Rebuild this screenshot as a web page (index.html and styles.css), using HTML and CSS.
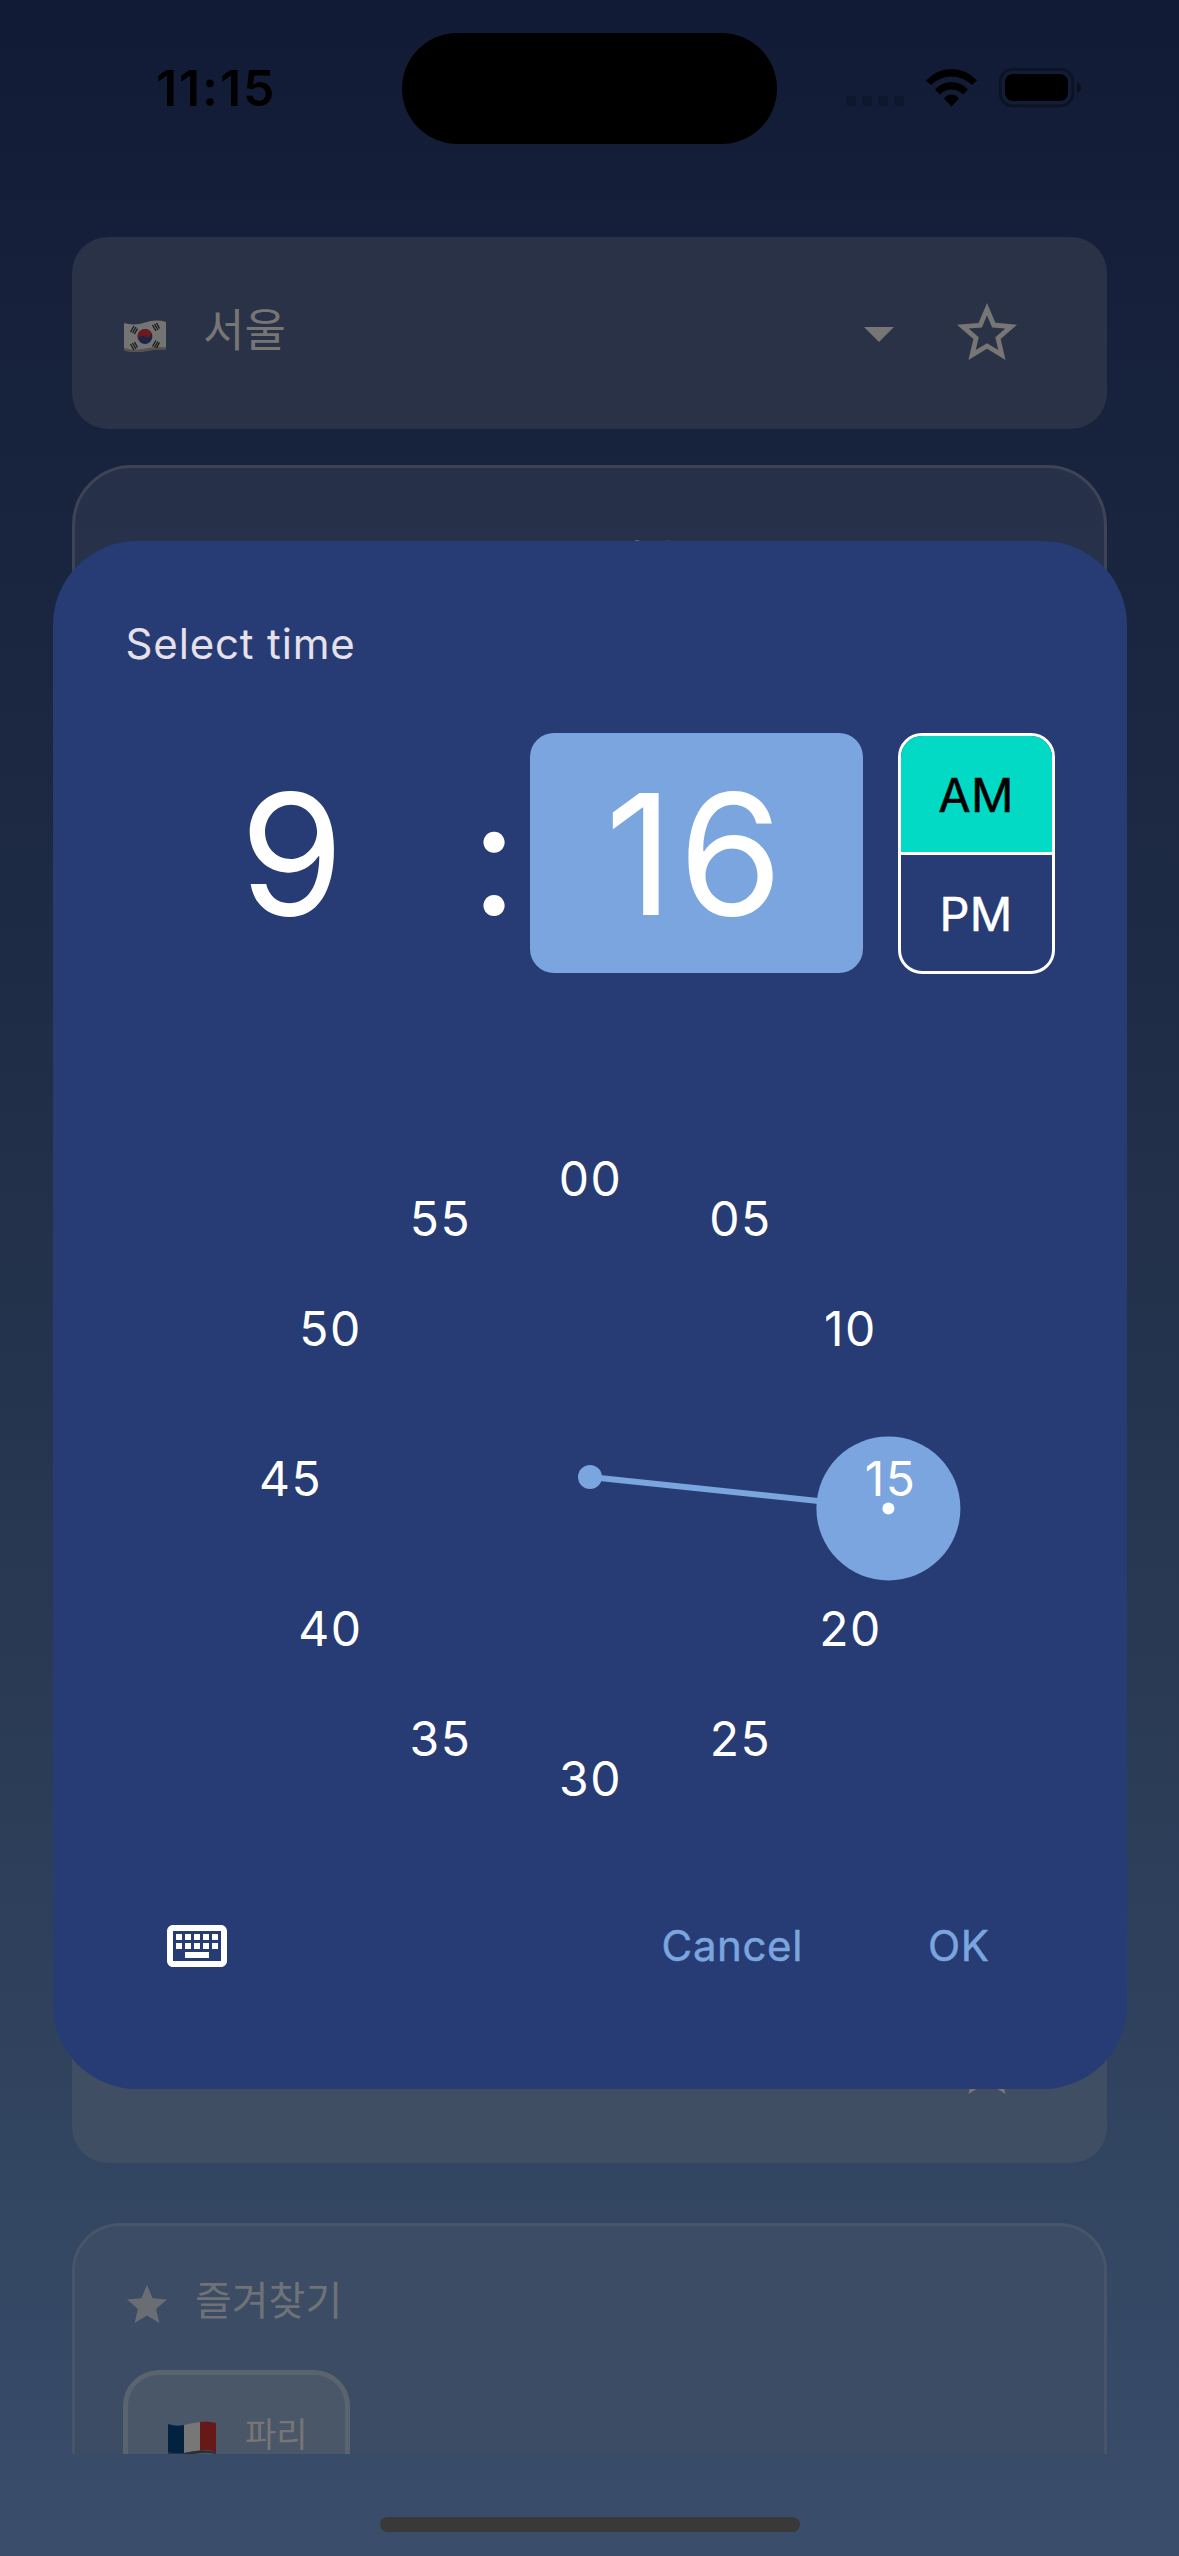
FILE: index.html
```html
<!DOCTYPE html>
<html lang="ko">
<head>
<meta charset="utf-8">
<title>Select time</title>
<link rel="stylesheet" href="styles.css">
</head>
<body>
<div class="screen">
  <header class="status">
    <div class="clock">11:15</div>
    <div class="island"></div>
    <svg class="signals" width="240" height="44" viewBox="0 0 240 44">
      <g fill="#0e172b"><rect x="0" y="28" width="10" height="10" rx="3.5"/><rect x="16" y="28" width="10" height="10" rx="3.5"/><rect x="32" y="28" width="10" height="10" rx="3.5"/><rect x="48" y="28" width="10" height="10" rx="3.5"/></g>
      <path d="M80 12.5Q91 1 105.500 1T131 12.500L126 17Q117 8.500 105.500 8.500T85 17ZM89 21.500Q96 14 105.500 14T122 21.500L117 26.500Q112 21.500 105.500 21.500T94 26.500ZM98 30.500Q101 26.500 105.500 26.500T113 30.500L105.500 38.500Z"/>
      <rect x="154.300" y="1.300" width="72.500" height="36.500" rx="12" fill="none" stroke="#0c1323" stroke-width="2.800"/>
      <rect x="159" y="6" width="63" height="27" rx="8"/>
      <path d="M231 14Q235 16 235 19.500T231 25.500Z" fill="#0a101e"/>
    </svg>
  </header>

  <main class="content">
    <section class="city">
      <svg class="flag-kr" width="42" height="32" viewBox="0 0 42 32">
        <path d="M0 3Q10 6 21 2.500T42 2V29Q32 28 21 30.500T0 30Z" fill="#757474"/>
        <path d="M0 28Q10 31 21 28.500T42 27.500V30Q32 29 21 31.500T0 30.500Z" fill="#55534f"/>
        <circle cx="21" cy="16.500" r="7.400" fill="#1d2444"/>
        <path d="M14 19A7.400 7.400 0 0 1 28 14Q25 19 21 16.500T14 19Z" fill="#6e1820"/>
        <g stroke="#171717" stroke-width="1.300"><path d="M6.500 12l3.500-6M8.500 13l3.500-6M10.500 14l3-5.500M6.500 24l3.500 6M8.500 23l3.500 6M10.500 22l3 5.500M28.500 5l3.500 6M30.500 4l3.500 6M32.500 3l3 5.500M28.500 26.500l3.500-6M30.500 27.500l3.500-6M32.500 28l3-5.500"/></g>
      </svg>
      <span class="city-name">서울</span>
      <svg class="icon" width="72" height="72" viewBox="0 0 24 24"><path d="M7 10l5 5 5-5z"/></svg>
      <svg class="icon star" width="72" height="72" viewBox="0 0 24 24"><path d="M22 9.240l-7.190-.62L12 2 9.190 8.630 2 9.240l5.460 4.730L5.820 21 12 17.270 18.180 21l-1.630-7.030L22 9.240zM12 15.400l-3.760 2.270 1-4.280-3.320-2.880 4.380-.38L12 6.100l1.710 4.040 4.380.38-3.320 2.880 1 4.280L12 15.400z"/></svg>
    </section>

    <section class="panel"><span class="panel-name">서울</span></section>

    <section class="city second">
      <svg class="icon star" width="72" height="72" viewBox="0 0 24 24"><path d="M22 9.240l-7.190-.62L12 2 9.190 8.630 2 9.240l5.460 4.730L5.820 21 12 17.270 18.180 21l-1.630-7.030L22 9.240zM12 15.400l-3.760 2.270 1-4.280-3.320-2.880 4.380-.38L12 6.100l1.710 4.040 4.380.38-3.320 2.880 1 4.280L12 15.400z"/></svg>
    </section>

    <section class="favorites">
      <h2 class="fav-title">
        <svg width="48" height="48" viewBox="0 0 24 24"><path d="M12 17.270L18.180 21l-1.640-7.030L22 9.240l-7.190-.61L12 2 9.190 8.630 2 9.240l5.460 4.730L5.820 21z"/></svg>
        <span>즐겨찾기</span>
      </h2>
      <div class="chip">
        <svg width="48" height="38" viewBox="0 0 48 38">
          <path d="M0 3Q8 6 16 4V32Q8 34 0 31Z" fill="#032240"/>
          <path d="M16 4Q24 2 32 1V29.500Q24 30 16 32Z" fill="#777"/>
          <path d="M32 1Q40-.5 48 2V31Q40 28 32 29.500Z" fill="#661916"/>
          <path d="M0 31Q8 34 16 32T32 29.500T48 31V33Q40 31 32 32T16 34.500T0 33Z" fill="#2c2d33"/>
        </svg>
        <span>파리</span>
      </div>
    </section>
  </main>
  <div class="home"></div>

  <div class="dialog" role="dialog">
    <h1 class="title">Select time</h1>
    <div class="time">
      <div class="digits">9</div>
      <div class="colon">:</div>
      <div class="digits selected">16</div>
      <div class="period">
        <div class="half am">AM</div>
        <div class="half pm">PM</div>
      </div>
    </div>
    <div class="dial">
      <svg class="hand" width="768" height="768" viewBox="-384 -384 768 768">
        <g fill="#7aa5de"><path d="M0 0L298.400 31.400" stroke="#7aa5de" stroke-width="6"/><circle r="12"/><circle cx="298.400" cy="31.400" r="72"/></g>
        <circle cx="298.400" cy="31.400" r="6" fill="#fff"/>
      </svg>
      <span class="m m00">00</span><span class="m m05">05</span><span class="m m10">10</span><span class="m m15">15</span>
      <span class="m m20">20</span><span class="m m25">25</span><span class="m m30">30</span><span class="m m35">35</span>
      <span class="m m40">40</span><span class="m m45">45</span><span class="m m50">50</span><span class="m m55">55</span>
    </div>
    <div class="actions">
      <svg width="72" height="72" viewBox="0 0 24 24" fill="#fff"><path d="M20 7v10H4V7h16m0-2H4c-1.100 0-1.990.9-1.990 2L2 17c0 1.100.9 2 2 2h16c1.100 0 2-.9 2-2V7c0-1.100-.9-2-2-2zm-9 3h2v2h-2V8zm0 3h2v2h-2v-2zM8 8h2v2H8V8zm0 3h2v2H8v-2zm-3 0h2v2H5v-2zm0-3h2v2H5V8zm3 6h8v2H8v-2zm6-3h2v2h-2v-2zm0-3h2v2h-2V8zm3 3h2v2h-2v-2zm0-3h2v2h-2V8z"/></svg>
      <span class="cancel">Cancel</span>
      <span class="ok">OK</span>
    </div>
  </div>
</div>
</body>
</html>
```
FILE: styles.css
```css
* { box-sizing: border-box; }
body { margin: 0; }
.screen {
  position: relative;
  width: 1179px;
  height: 2556px;
  overflow: hidden;
  display: flex;
  flex-direction: column;
  font-family: Inter, "Noto Sans CJK KR", sans-serif;
  background: linear-gradient(#121b36 0, #1f2c45 1000px, #324561 2190px, #3a4e6b 2556px);
}
svg { display: block; flex: none; }

.status {
  height: 237px;
  flex: none;
  display: grid;
  grid-template-columns: 402px 375px 1fr;
  align-items: start;
}
.clock {
  padding: 58px 0 0 156px;
  font-size: 50px;
  line-height: 60px;
  font-weight: 600;
  letter-spacing: 1.900px;
}
.island { margin-top: 33px; height: 111px; border-radius: 56px; background: #000; }
.signals { margin: 68px 0 0 69px; }

.content { height: 2217px; flex: none; padding: 0 72px; overflow: hidden; }
.city {
  height: 192px;
  border-radius: 36px;
  background: #2a3247;
  display: flex;
  padding: 60px 84px 60px 52px;
  fill: #777675;
  color: #777675;
}
.flag-kr { margin-top: 23px; }
.city-name { flex: 1; padding-left: 37px; font-size: 45px; line-height: 68px; font-weight: 400; }
.star { margin-left: 36px; }
.panel {
  height: 1470px;
  margin: 36px 0;
  border: 3px solid #3e4455;
  border-radius: 60px;
  background: linear-gradient(#263048, #3a4a5e);
  text-align: center;
  padding: 58px 0 0 112px;
  color: #777675;
}
.panel-name { display: block; font-size: 50px; line-height: 76px; font-weight: 400; }
.second { background: #404e63; justify-content: flex-end; }
.favorites {
  height: 400px;
  margin-top: 60px;
  border: 3px solid #485569;
  border-radius: 48px;
  background: #3c4c65;
  padding: 48px;
}
.fav-title {
  margin: 0;
  display: flex;
  gap: 24px;
  padding-top: 7px;
  fill: #6a6e73;
  color: #6f7276;
  font-size: 40px;
  line-height: 40px;
  font-weight: 400;
}
.chip {
  width: 227px;
  height: 150px;
  margin-top: 41px;
  border: 5px solid #5a646f;
  border-radius: 36px;
  background: #4a5768;
  padding: 46px 0 0 40px;
  display: flex;
  gap: 29px;
  color: #777675;
  font-size: 34px;
  line-height: 28px;
  font-weight: 400;
  white-space: nowrap;
}
.home { width: 420px; height: 15px; margin: 63px auto 0; border-radius: 8px; background: #393939; }

.dialog {
  position: absolute;
  left: 52.500px;
  top: 541.300px;
  width: 1074px;
  height: 1548px;
  border-radius: 84px;
  background: #273b74;
  padding: 72px 72px 0 73px;
  color: #fff;
}
.title {
  margin: 0;
  color: #e6e0e9;
  font-size: 42px;
  line-height: 62px;
  font-weight: 400;
  letter-spacing: 0.850px;
}
.time { display: flex; margin-top: 58px; height: 240px; }
.digits {
  width: 333px;
  border-radius: 24px;
  text-align: center;
  font-size: 168px;
  line-height: 243px;
}
.colon { width: 72px; text-align: center; font-size: 160px; line-height: 248px; }
.selected { background: #7aa5de; letter-spacing: 5px; }
.period {
  width: 157px;
  height: 241px;
  margin-left: 35px;
  border: 3px solid #fff;
  border-radius: 24px;
  overflow: hidden;
  text-align: center;
  font-size: 47px;
  font-weight: 400;
  letter-spacing: 0.300px;
  -webkit-text-stroke: 0.500px;
}
.half { height: 116px; line-height: 117px; }
.am { background: #03dac6; color: #000; }
.pm { height: 119px; border-top: 3px solid #fff; }

.dial { position: relative; width: 768px; height: 768px; margin: 120px 0 0 80px; }
.m {
  position: absolute;
  width: 120px;
  margin: -29px 0 0 -59px;
  text-align: center;
  font-size: 48px;
  line-height: 60px;
  letter-spacing: 1.500px;
}
.m00 { left: 384px; top: 85px; }
.m05 { left: 534px; top: 125px; }
.m10 { left: 644px; top: 235px; }
.m15 { left: 684px; top: 385px; }
.m20 { left: 644px; top: 535px; }
.m25 { left: 534px; top: 645px; }
.m30 { left: 384px; top: 685px; }
.m35 { left: 234px; top: 645px; }
.m40 { left: 124px; top: 535px; }
.m45 { left: 84px; top: 385px; }
.m50 { left: 124px; top: 235px; }
.m55 { left: 234px; top: 125px; }

.actions {
  display: flex;
  align-items: center;
  height: 72px;
  margin-top: 49px;
  padding: 0 65px 0 35px;
  color: #7aa5de;
  font-size: 42px;
  line-height: 50px;
  font-weight: 400;
  letter-spacing: 0.600px;
  -webkit-text-stroke: 0.500px;
}
.cancel { margin-left: auto; }
.ok { margin-left: 125px; }
```
